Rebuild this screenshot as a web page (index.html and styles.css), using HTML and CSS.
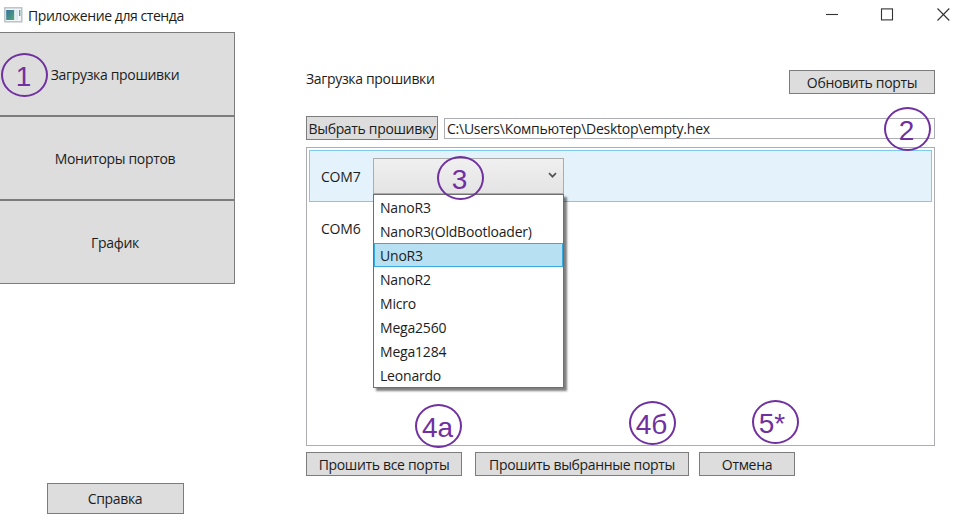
FILE: index.html
```html
<!DOCTYPE html>
<html lang="ru">
<head>
<meta charset="utf-8">
<title>Приложение для стенда</title>
<link rel="stylesheet" href="styles.css">
</head>
<body>
<div class="window">
  <header class="titlebar">
    <svg class="app-icon" width="19" height="16" viewBox="0 0 19 16">
      <defs><linearGradient id="g" x1="0" y1="0" x2="1" y2="1"><stop offset="0" stop-color="#356f9c"/><stop offset="1" stop-color="#55a878"/></linearGradient></defs>
      <rect x=".8" y=".8" width="17" height="14" fill="#f3f5f7" stroke="#b7bfc6" stroke-width="1.4"/>
      <rect x="2.2" y="3" width="8" height="10" fill="url(#g)"/>
      <rect x="11.5" y="3" width="2.4" height="10" fill="#dde8f3"/>
      <rect x="15" y="3" width="1.4" height="6" fill="#62a69a"/>
    </svg>
    <h1 class="title"><span>Приложение для стенда</span></h1>
    <svg class="controls" width="124" height="14" viewBox="0 0 124 14" fill="none" stroke="#333" stroke-width="1.1">
      <path d="M0 6.5H12"/>
      <rect x="55.5" y=".9" width="11" height="11"/>
      <path d="M111.5 .5L123.3 12.5M123.3 .5L111.5 12.5"/>
    </svg>
  </header>
  <div class="content">
    <nav class="sidebar">
      <button class="nav"><span>Загрузка прошивки</span></button>
      <button class="nav"><span>Мониторы портов</span></button>
      <button class="nav"><span>График</span></button>
      <button class="btn help"><span>Справка</span></button>
    </nav>
    <main class="main">
      <div class="heading">
        <h2><span>Загрузка прошивки</span></h2>
        <button class="btn refresh"><span>Обновить порты</span></button>
      </div>
      <div class="file">
        <button class="btn choose"><span>Выбрать прошивку</span></button>
        <div class="path"><span class="path-text">C:\Users\Компьютер\Desktop\empty.hex</span></div>
      </div>
      <div class="ports">
        <div class="port selected">
          <span class="port-name">COM7</span>
          <div class="combo">
            <svg class="chevron" width="9" height="7" viewBox="0 0 9 7" fill="none" stroke="#555" stroke-width="1.7"><path d="M1 1.2L4.5 4.7L8 1.2"/></svg>
            <ul class="menu">
              <li><span>NanoR3</span></li>
              <li><span>NanoR3(OldBootloader)</span></li>
              <li class="active"><span>UnoR3</span></li>
              <li><span>NanoR2</span></li>
              <li><span>Micro</span></li>
              <li><span>Mega2560</span></li>
              <li><span>Mega1284</span></li>
              <li><span>Leonardo</span></li>
            </ul>
          </div>
        </div>
        <div class="port"><span class="port-name">COM6</span></div>
      </div>
      <div class="actions">
        <button class="btn flash-all"><span>Прошить все порты</span></button>
        <button class="btn flash-sel"><span>Прошить выбранные порты</span></button>
        <button class="btn cancel"><span>Отмена</span></button>
      </div>
    </main>
  </div>
  <div class="mark m1">1</div>
  <div class="mark m2">2</div>
  <div class="mark m3">3</div>
  <div class="mark m4a">4а</div>
  <div class="mark m4b">4б</div>
  <div class="mark m5">5*</div>
</div>
</body>
</html>
```
FILE: styles.css
```css
* { box-sizing: border-box; }
body { margin: 0; background: #fff; color: #1c1c1c; font: 14px/20px "Open Sans", "Noto Sans", sans-serif; letter-spacing: -.33px; }
.window { position: relative; width: 967px; height: 532px; overflow: hidden; }
.titlebar { display: flex; align-items: center; height: 32px; padding: 0 17px 3px 4px; }
.app-icon { margin-right: 5px; }
.title, h2 { margin: 0; font: inherit; white-space: nowrap; }
.title { padding-top: 2px; letter-spacing: -.43px; }
.controls { margin-left: auto; }
.content { display: flex; height: 500px; }
.sidebar { display: flex; flex-direction: column; width: 235px; }
button { font: inherit; color: inherit; letter-spacing: inherit; padding: 0; background: #ddd; border: 1px solid #7c7c7c; white-space: nowrap; border-radius: 0; }
.nav { height: 84px; border-left: 0; padding: 2px 4px 0 0; }
.btn { display: flex; align-items: center; justify-content: center; height: 24px; }
.help { width: 137px; height: 31px; margin: 199px 0 0 47px; padding: 1px 1px 0 0; }
.main { width: 629px; margin-left: 71px; padding-top: 38px; }
.heading { display: flex; justify-content: space-between; height: 46px; }
h2 { margin-top: -1px; }
.refresh { width: 146px; padding-top: 1px; }
.choose { width: 132px; padding-top: 1px; }
.file { display: flex; align-items: center; gap: 6px; height: 24px; }
.path { flex: 1; display: flex; align-items: center; height: 21px; padding: 1px 0 0 2px; border: 1px solid #abadb3; white-space: nowrap; letter-spacing: -.25px; }
.ports { height: 299px; margin-top: 7px; padding: 2px; border: 1px solid #abadb3; }
.port { display: flex; align-items: center; height: 52px; padding-left: 11px; border: 1px solid transparent; }
.selected { margin-bottom: 1px; background: #e4f3fb; border-color: #7fc9ec; }
.port-name { width: 52px; letter-spacing: -.2px; }
.selected .port-name { padding-top: 1px; }
.combo { position: relative; width: 191px; height: 36px; border: 1px solid #acacac; background: linear-gradient(#f0f0f0, #e4e4e4); }
.chevron { position: absolute; right: 6px; top: 13px; }
.menu { position: absolute; z-index: 1; top: 35px; left: -1px; width: 191px; height: 194px; margin: 0; padding: 0; list-style: none; background: #fff; border: 1px solid #6f6f6f; box-shadow: 3px 3px 2px rgba(0,0,0,.5); letter-spacing: -.2px; }
.menu li { height: 24px; padding: 1px 0 0 5px; line-height: 22px; border: 1px solid transparent; }
.menu .active { background: #b7e0f2; border-color: #3aaade; }
.actions { display: flex; margin-top: 6px; }
.actions .btn { padding-top: 1px; }
.flash-all { width: 156px; margin-right: 13px; }
.flash-sel { width: 214px; margin-right: 10px; }
.cancel { width: 96px; }
.mark { position: absolute; z-index: 2; width: 47px; height: 44px; padding-right: 2px; border: 2px solid #7030a0; border-radius: 50%; color: #7030a0; font: 28px/44px "Liberation Sans", Arial, sans-serif; letter-spacing: 0; text-align: center; }
.m1 { left: 1px; top: 53px; }
.m2 { left: 884px; top: 107px; }
.m3 { left: 437px; top: 156px; }
.m4a { left: 415px; top: 404px; }
.m4b { left: 629px; top: 401px; }
.m5 { left: 752px; top: 400px; padding-right: 7px; }
```
